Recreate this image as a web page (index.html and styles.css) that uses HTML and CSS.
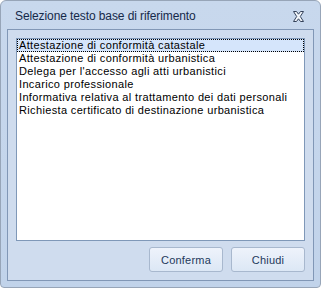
FILE: index.html
```html
<!DOCTYPE html>
<html lang="it">
<head>
    <meta charset="UTF-8">
    <title>Selezione testo base di riferimento</title>
    <link rel="stylesheet" href="styles.css">
</head>
<body>

    <div class="window">
        <div class="titlebar">
            <span class="title">Selezione testo base di riferimento</span>
            <svg class="close" width="13" height="11" viewBox="0 0 13 11">
                <path d="M1.5 0.5 H4.5 L6.5 3.2 L8.5 0.5 H11.5 L8.3 5.5 L11.5 10.5 H8.5 L6.5 7.8 L4.5 10.5 H1.5 L4.7 5.5 Z" fill="#f4f7fb" stroke="#34425a" stroke-width="1" stroke-linejoin="round"/>
            </svg>
        </div>

        <div class="panel">
            <ul class="listbox">
                <li class="selected">Attestazione di conformità catastale</li>
                <li>Attestazione di conformità urbanistica</li>
                <li>Delega per l'accesso agli atti urbanistici</li>
                <li>Incarico professionale</li>
                <li>Informativa relativa al trattamento dei dati personali</li>
                <li>Richiesta certificato di destinazione urbanistica</li>
            </ul>

            <div class="buttons">
                <button class="btn">Conferma</button>
                <button class="btn">Chiudi</button>
            </div>
        </div>
    </div>

</body>
</html>
```

FILE: styles.css
```css
body, html {
    margin: 0;
    padding: 0;
    background: #ffffff;
}

/* Dialog frame */
.window {
    width: 321px;
    height: 288px;
    box-sizing: border-box;
    border: 1px solid #97a5b8;
    border-radius: 6px 6px 4px 4px;
    background: linear-gradient(#c8d8ed, #c1d3ea);
    display: flex;
    flex-direction: column;
}

.titlebar {
    height: 28px;
    flex: none;
    display: flex;
    align-items: center;
    justify-content: space-between;
    padding: 0 15px 0 14px;
}

.title {
    font-family: "Liberation Sans", Arial, sans-serif;
    font-size: 12px;
    letter-spacing: -0.1px;
    color: #15294a;
    margin-top: 2px;
}

.close {
    display: block;
    margin-top: 3px;
}

/* Client area */
.panel {
    flex: 1;
    margin: 0 6px 6px;
    border: 1px solid #8197b6;
    background: #cfdcee;
    padding: 8px 8px 8px;
    display: flex;
    flex-direction: column;
    gap: 6px;
}

.listbox {
    flex: 1;
    margin: 0;
    padding: 0;
    list-style-type: none;
    background: #ffffff;
    border: 1px solid #7f98b8;
    font-family: "Liberation Sans", Arial, sans-serif;
    font-size: 11px;
    letter-spacing: 0.35px;
    color: #000000;
}

.listbox li {
    height: 13px;
    line-height: 13px;
    padding-left: 1px;
    border: 1px solid transparent;
    border-width: 0 1px;
    white-space: nowrap;
}

.listbox li.selected {
    background: #d5e5fb;
    outline: 1px dotted #000000;
    outline-offset: -1px;
}

/* Buttons */
.buttons {
    display: flex;
    justify-content: flex-end;
    gap: 8px;
}

.btn {
    width: 74px;
    height: 25px;
    margin: 0;
    padding: 0;
    border: 1px solid #a8b8ce;
    border-radius: 3px;
    background: linear-gradient(#eef3fb, #dce7f5);
    font-family: "Liberation Sans", Arial, sans-serif;
    font-size: 11px;
    letter-spacing: 0.2px;
    color: #1e395b;
}
```
